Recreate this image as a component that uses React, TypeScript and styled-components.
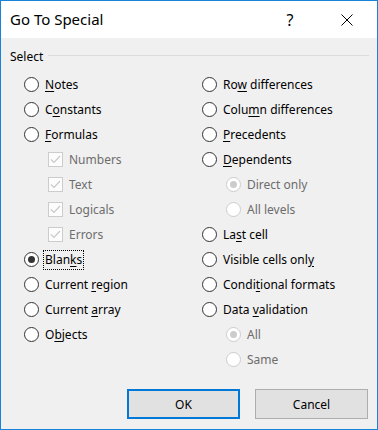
import React from "react";
import styled, { createGlobalStyle } from "styled-components";

const GlobalStyle = createGlobalStyle`
  html, body {
    margin: 0;
    padding: 0;
    background: #ffffff;
  }
  body {
    font-family: "Noto Sans", "Open Sans", sans-serif;
    font-size: 12px;
    color: #000000;
  }
`;

const Window = styled.div`
  box-sizing: border-box;
  width: 378px;
  height: 430px;
  border: 1px solid #1883d7;
  background: #f0f0f0;
  display: flex;
  flex-direction: column;
`;

const TitleBar = styled.div`
  height: 37px;
  background: #ffffff;
  display: flex;
  align-items: center;
  padding-left: 9px;
  padding-right: 7px;
`;

const Title = styled.div`
  flex: 1;
  font-size: 15px;
  line-height: 20px;
  margin-top: -1px;
`;

const TitleButton = styled.div<{ $w: number; $gap?: number }>`
  width: ${(p) => p.$w}px;
  height: 37px;
  margin-right: ${(p) => p.$gap ?? 0}px;
  display: flex;
  align-items: center;
  justify-content: center;
  font-size: 16px;
  color: #000;
`;

const GroupHeader = styled.div`
  display: flex;
  align-items: flex-start;
  margin-top: 11px;
  padding-left: 9px;
  padding-right: 8px;
  height: 16px;
  line-height: 16px;
`;

const GroupLine = styled.div`
  flex: 1;
  height: 1px;
  background: #dcdcdc;
  margin-top: 6px;
  margin-left: 5px;
`;

const Options = styled.div`
  display: grid;
  grid-template-columns: 178px 1fr;
  margin-top: 7px;
  padding-left: 23px;
`;

const Column = styled.div`
  display: flex;
  flex-direction: column;
`;

const Row = styled.div<{ $indent?: boolean }>`
  height: 25px;
  display: flex;
  align-items: center;
  padding-left: ${(p) => (p.$indent ? 24 : 0)}px;
`;

const RadioCircle = styled.span<{ $checked?: boolean; $disabled?: boolean }>`
  box-sizing: border-box;
  width: 15px;
  height: 15px;
  border-radius: 50%;
  border: 1px solid ${(p) => (p.$disabled ? "#cccccc" : "#333333")};
  background: #ffffff;
  display: flex;
  align-items: center;
  justify-content: center;
  flex: none;
  &::after {
    content: "";
    display: ${(p) => (p.$checked ? "block" : "none")};
    width: 7px;
    height: 7px;
    border-radius: 50%;
    background: ${(p) => (p.$disabled ? "#cccccc" : "#333333")};
  }
`;

const CheckBox = styled.span`
  box-sizing: border-box;
  width: 15px;
  height: 15px;
  border: 1px solid #cccccc;
  background: #fcfcfc;
  display: flex;
  align-items: center;
  justify-content: center;
  flex: none;
`;

const Label = styled.span<{ $disabled?: boolean; $focus?: boolean }>`
  margin-left: 4px;
  padding: 1px;
  line-height: 16px;
  border: 1px ${(p) => (p.$focus ? "dotted #000" : "solid transparent")};
  color: ${(p) => (p.$disabled ? "#6d6d6d" : "#000000")};
  white-space: nowrap;
`;

const Key = styled.u`
  text-underline-offset: 2px;
`;

const Footer = styled.div`
  display: flex;
  justify-content: flex-end;
  gap: 15px;
  margin-top: 17px;
  padding-right: 9px;
`;

const Button = styled.button<{ $default?: boolean }>`
  box-sizing: border-box;
  width: 113px;
  height: 30px;
  background: #e1e1e1;
  border: ${(p) => (p.$default ? "2px solid #0078d7" : "1px solid #adadad")};
  font-family: "Noto Sans", "Open Sans", sans-serif;
  font-size: 12px;
  color: #000;
  padding: 0;
`;

type Opt = {
  text: React.ReactNode;
  kind?: "radio" | "check";
  checked?: boolean;
  disabled?: boolean;
  indent?: boolean;
  focus?: boolean;
};

const k = (before: string, key: string, after: string) => (
  <>
    {before}
    <Key>{key}</Key>
    {after}
  </>
);

const leftOptions: Opt[] = [
  { text: k("", "N", "otes") },
  { text: k("C", "o", "nstants") },
  { text: k("", "F", "ormulas") },
  { text: "Numbers", kind: "check", checked: true, disabled: true, indent: true },
  { text: "Text", kind: "check", checked: true, disabled: true, indent: true },
  { text: "Logicals", kind: "check", checked: true, disabled: true, indent: true },
  { text: "Errors", kind: "check", checked: true, disabled: true, indent: true },
  { text: k("Blan", "k", "s"), checked: true, focus: true },
  { text: k("Current ", "r", "egion") },
  { text: k("Current ", "a", "rray") },
  { text: k("O", "b", "jects") },
];

const rightOptions: Opt[] = [
  { text: k("Ro", "w", " differences") },
  { text: k("Colu", "m", "n differences") },
  { text: k("", "P", "recedents") },
  { text: k("", "D", "ependents") },
  { text: "Direct only", checked: true, disabled: true, indent: true },
  { text: "All levels", disabled: true, indent: true },
  { text: k("La", "s", "t cell") },
  { text: k("Visible cells onl", "y", "") },
  { text: k("Condi", "t", "ional formats") },
  { text: k("Data ", "v", "alidation") },
  { text: "All", checked: true, disabled: true, indent: true },
  { text: "Same", disabled: true, indent: true },
];

function Check() {
  return (
    <svg width="11" height="9" viewBox="0 0 11 9">
      <path d="M1 4.5 L4 7.5 L10 1" fill="none" stroke="#c8c8c8" strokeWidth="1.2" />
    </svg>
  );
}

function Option({ o }: { o: Opt }) {
  return (
    <Row $indent={o.indent}>
      {o.kind === "check" ? (
        <CheckBox>{o.checked && <Check />}</CheckBox>
      ) : (
        <RadioCircle $checked={o.checked} $disabled={o.disabled} />
      )}
      <Label $disabled={o.disabled} $focus={o.focus}>
        {o.text}
      </Label>
    </Row>
  );
}

function CloseIcon() {
  return (
    <svg width="12" height="12" viewBox="0 0 12 12">
      <path d="M0.5 0.5 L11.5 11.5 M11.5 0.5 L0.5 11.5" stroke="#000" strokeWidth="1" />
    </svg>
  );
}

export default function App() {
  return (
    <>
      <GlobalStyle />
      <Window>
        <TitleBar>
          <Title>Go To Special</Title>
          <TitleButton $w={22} $gap={23}>?</TitleButton>
          <TitleButton $w={46}>
            <CloseIcon />
          </TitleButton>
        </TitleBar>
        <GroupHeader>
          <span>Select</span>
          <GroupLine />
        </GroupHeader>
        <Options>
          <Column>
            {leftOptions.map((o, i) => (
              <Option key={i} o={o} />
            ))}
          </Column>
          <Column>
            {rightOptions.map((o, i) => (
              <Option key={i} o={o} />
            ))}
          </Column>
        </Options>
        <Footer>
          <Button $default>OK</Button>
          <Button>Cancel</Button>
        </Footer>
      </Window>
    </>
  );
}
